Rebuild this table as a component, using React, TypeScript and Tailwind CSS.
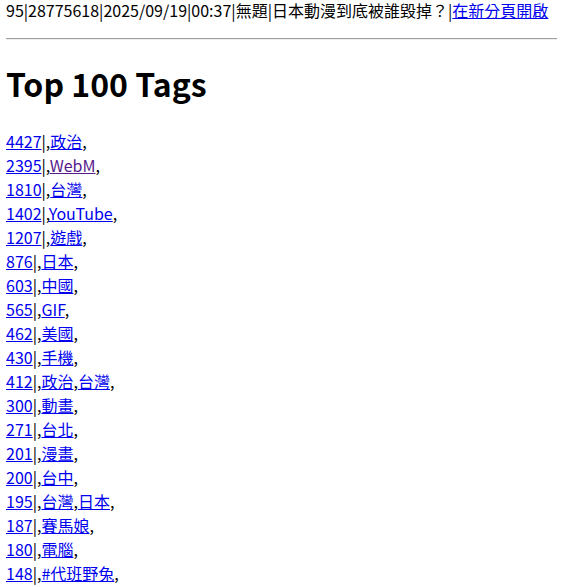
const tags: { count: string; names: string[]; visited?: boolean }[] = [
  { count: "4427", names: ["政治"] },
  { count: "2395", names: ["WebM"], visited: true },
  { count: "1810", names: ["台灣"] },
  { count: "1402", names: ["YouTube"] },
  { count: "1207", names: ["遊戲"] },
  { count: "876", names: ["日本"] },
  { count: "603", names: ["中國"] },
  { count: "565", names: ["GIF"] },
  { count: "462", names: ["美國"] },
  { count: "430", names: ["手機"] },
  { count: "412", names: ["政治", "台灣"] },
  { count: "300", names: ["動畫"] },
  { count: "271", names: ["台北"] },
  { count: "201", names: ["漫畫"] },
  { count: "200", names: ["台中"] },
  { count: "195", names: ["台灣", "日本"] },
  { count: "187", names: ["賽馬娘"] },
  { count: "180", names: ["電腦"] },
  { count: "148", names: ["#代班野兔"] },
];

export default function App() {
  return (
    <div className="h-[587px] overflow-hidden bg-white text-black px-[6px] text-[16px] leading-[24px] font-['Noto_Sans_CJK_TC','Noto_Sans_CJK_SC',sans-serif]">
      <div className="leading-[20px] whitespace-nowrap">
        95|28775618|2025/09/19|00:37|無題|日本動漫到底被誰毀掉？|
        <a href="#" className="text-[#0000ee] underline">
          在新分頁開啟
        </a>
      </div>
      <hr className="mt-[18px] mr-[4px] border-0 border-t border-t-[#a0a0a0] border-b border-b-[#eeeeee]" />
      <h1 className="mt-[20px] text-[32px] leading-[46px] font-bold">Top 100 Tags</h1>
      <div className="mt-[23px]">
        {tags.map((t) => (
          <div key={t.count}>
            <a href="#" className="text-[#0000ee] underline">
              {t.count}
            </a>
            |,
            {t.names.map((n, i) => (
              <span key={i}>
                <a
                  href="#"
                  className={`underline ${t.visited ? "text-[#551a8b]" : "text-[#0000ee]"}`}
                >
                  {n}
                </a>
                ,
              </span>
            ))}
          </div>
        ))}
      </div>
    </div>
  );
}
